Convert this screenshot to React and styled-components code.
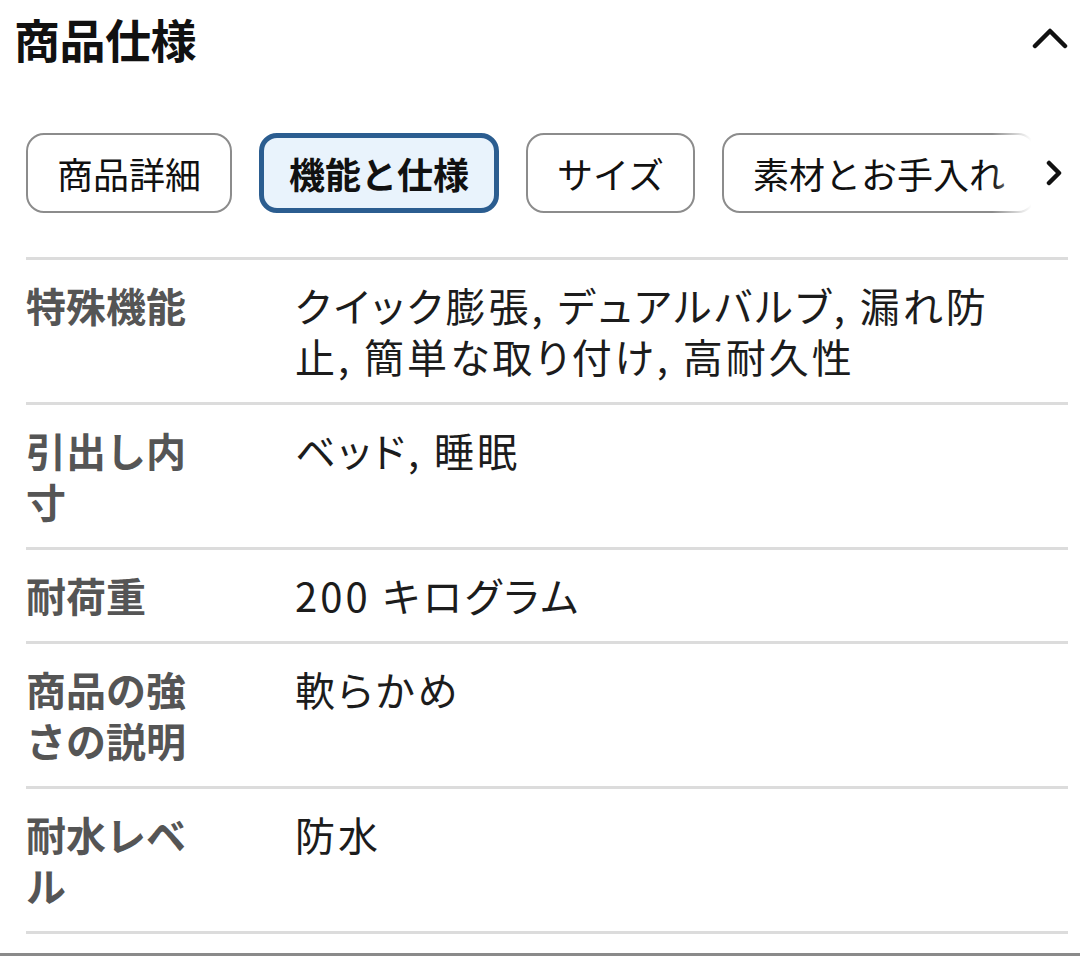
import React from 'react';
import styled, { createGlobalStyle } from 'styled-components';

const GlobalStyle = createGlobalStyle`
  html, body {
    margin: 0;
    padding: 0;
    background: #ffffff;
  }
  body {
    font-family: "Noto Sans CJK JP", "Noto Sans", sans-serif;
    color: #111;
  }
`;

const Page = styled.div`
  width: 1080px;
  height: 956px;
  box-sizing: border-box;
  display: flex;
  flex-direction: column;
  overflow: hidden;
`;

const Header = styled.div`
  display: flex;
  align-items: center;
  justify-content: space-between;
  padding: 10px 12px 0 14px;
  height: 56px;
`;

const Title = styled.h2`
  margin: 0;
  font-size: 46px;
  line-height: 56px;
  font-weight: 700;
  color: #111;
  letter-spacing: -0.5px;
`;

const TabRow = styled.div`
  display: flex;
  align-items: center;
  margin: 67px 12px 0 26px;
`;

const TabStrip = styled.div`
  position: relative;
  flex: 1;
  display: flex;
  gap: 27px;
  overflow: hidden;
`;

const Fade = styled.div`
  position: absolute;
  top: 0;
  right: 0;
  bottom: 0;
  width: 44px;
  background: linear-gradient(to right, rgba(255, 255, 255, 0), #fff 90%);
  pointer-events: none;
`;

const Tab = styled.button`
  flex-shrink: 0;
  height: 80px;
  box-sizing: border-box;
  padding: 0 ${p => (p.active ? 25 : 29)}px;
  border: ${p => (p.active ? '5px solid #2b5d90' : '2px solid #8c8c8c')};
  border-radius: 18px;
  background: ${p => (p.active ? '#e9f3fc' : '#fff')};
  font-family: "Noto Sans CJK JP", sans-serif;
  font-size: 36px;
  font-weight: ${p => (p.active ? 700 : 400)};
  color: #111;
  white-space: nowrap;
`;

const NextButton = styled.div`
  width: 32px;
  display: flex;
  justify-content: flex-end;
  padding-right: 6px;
  box-sizing: border-box;
`;

const Table = styled.div`
  margin: 44px 12px 0 26px;
  border-bottom: 3px solid #dcdcdc;
`;

const Row = styled.div`
  display: grid;
  grid-template-columns: 180px 720px;
  column-gap: 89px;
  padding: 20px 0;
  border-top: 3px solid #dcdcdc;
`;

const Label = styled.div`
  font-size: 40px;
  line-height: 51px;
  font-weight: 700;
  color: #555;
`;

const Value = styled.div`
  font-size: 40px;
  line-height: 51px;
  font-weight: 400;
  color: #1c1c1c;
  font-feature-settings: "palt";
  letter-spacing: 3px;
`;

const BottomEdge = styled.div`
  margin-top: auto;
  height: 3px;
  background: #8a8a8a;
`;

const tabs = ['商品詳細', '機能と仕様', 'サイズ', '素材とお手入れ'];

const specs = [
  { label: '特殊機能', value: 'クイック膨張, デュアルバルブ, 漏れ防止, 簡単な取り付け, 高耐久性' },
  { label: '引出し内寸', value: 'ベッド, 睡眠' },
  { label: '耐荷重', value: '200 キログラム' },
  { label: '商品の強さの説明', value: '軟らかめ' },
  { label: '耐水レベル', value: '防水' },
];

const App = () => {
  return (
    <>
      <GlobalStyle />
      <Page>
        <Header>
          <Title>商品仕様</Title>
          <svg width="36" height="24" viewBox="0 0 36 24">
            <path d="M3 20 L18 5 L33 20" fill="none" stroke="#111" strokeWidth="4.5" strokeLinecap="round" strokeLinejoin="round" />
          </svg>
        </Header>

        <TabRow>
          <TabStrip>
            {tabs.map((t, i) => (
              <Tab key={t} active={i === 1}>{t}</Tab>
            ))}
            <Fade />
          </TabStrip>
          <NextButton>
            <svg width="16" height="26" viewBox="0 0 16 26">
              <path d="M3 3 L13 13 L3 23" fill="none" stroke="#111" strokeWidth="4.5" strokeLinecap="round" strokeLinejoin="round" />
            </svg>
          </NextButton>
        </TabRow>

        <Table>
          {specs.map(s => (
            <Row key={s.label}>
              <Label>{s.label}</Label>
              <Value>{s.value}</Value>
            </Row>
          ))}
        </Table>
        <BottomEdge />
      </Page>
    </>
  );
};

export default App;
